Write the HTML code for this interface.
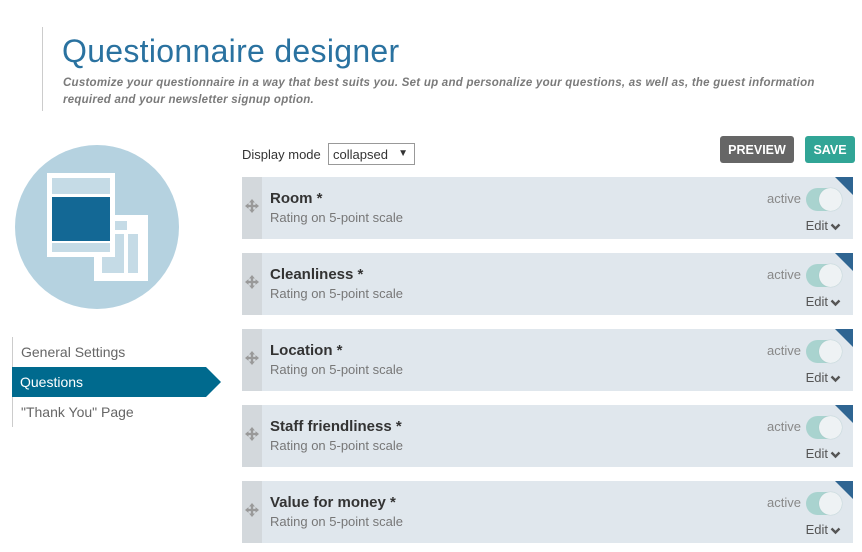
<!DOCTYPE html>
<html><head><meta charset="utf-8"><style>
*{margin:0;padding:0;box-sizing:border-box}
body{width:862px;height:552px;background:#fff;font-family:"Liberation Sans",sans-serif;position:relative;overflow:hidden}
.abs{position:absolute}
.vl{left:42px;top:27px;width:1px;height:84px;background:#ccc}
h1{position:absolute;left:62px;top:33px;font-size:32px;font-weight:normal;color:#2a72a0;letter-spacing:0.3px;white-space:nowrap}
.sub{position:absolute;left:63px;top:75px;width:780px;font-size:11.5px;font-weight:bold;font-style:italic;color:#7a7a7a;line-height:17px;letter-spacing:0.25px}
.nav{position:absolute;left:12px;top:337px;width:1px;height:90px;background:#ccc}
.ni{position:absolute;left:21px;font-size:14px;color:#666}
.q{position:absolute;left:12px;top:367px;width:194px;height:30px;background:#006a8e}
.qa{position:absolute;left:206px;top:367px;width:0;height:0;border-top:15px solid transparent;border-bottom:15px solid transparent;border-left:15px solid #006a8e}
.dm{position:absolute;left:242px;top:147px;font-size:13px;color:#333}
.sel{position:absolute;left:328px;top:143px;width:87px;height:22px;border:1px solid #999;font-size:13px;color:#333;padding:3px 4px}
.btn{position:absolute;top:136px;height:27px;color:#fff;font-weight:bold;font-size:12.5px;border-radius:3px;text-align:center;line-height:29px}
.card{position:absolute;left:242px;width:611px;height:62px;background:#e0e7ed;overflow:hidden}
.h{position:absolute;left:0;top:0;width:20px;height:62px;background:#d3d8dc}
.t{position:absolute;left:28px;top:13px;font-size:15px;font-weight:bold;color:#333}
.s{position:absolute;left:28px;top:33px;font-size:13px;color:#777}
.tri{position:absolute;right:0;top:0;width:0;height:0;border-top:18px solid #2f6592;border-left:18px solid transparent}
.act{position:absolute;right:52px;top:14px;font-size:13px;color:#888}
.tg{position:absolute;left:564px;top:11px;width:36px;height:23px;border-radius:12px;background:#a9d3cf}
.kn{position:absolute;right:0;top:0;width:23px;height:23px;border-radius:50%;background:#eef2f4;box-shadow:0 0 1px #9bb}
.ed{position:absolute;right:12px;top:41px;font-size:13px;color:#555}
.ed svg{vertical-align:middle;margin-left:2px}
</style></head><body>
<div class="abs vl"></div>
<h1>Questionnaire designer</h1>
<div class="sub">Customize your questionnaire in a way that best suits you. Set up and personalize your questions, as well as, the guest information required and your newsletter signup option.</div>
<svg class="abs" style="left:0;top:130px" width="200" height="190" viewBox="0 130 200 190">
<circle cx="97" cy="227" r="82" fill="#b5d2e0"/>
<rect x="94" y="215" width="54" height="66" fill="#fff"/>
<rect x="115" y="221" width="12" height="9" fill="#c5dbe6"/>
<rect x="102" y="234" width="22" height="39" fill="#c5dbe6"/>
<rect x="128" y="234" width="10" height="39" fill="#c5dbe6"/>
<rect x="47" y="173" width="68" height="84" fill="#fff"/>
<rect x="52" y="178" width="58" height="16" fill="#c5dbe6"/>
<rect x="52" y="197" width="58" height="44" fill="#136895"/>
<rect x="52" y="243" width="58" height="9" fill="#c5dbe6"/>
</svg>
<div class="nav"></div>
<div class="ni" style="top:344px">General Settings</div>
<div class="q"></div><div class="qa"></div>
<div class="ni" style="top:374px;left:20px;color:#fff">Questions</div>
<div class="ni" style="top:404px">"Thank You" Page</div>
<div class="dm">Display mode</div>
<div class="sel">collapsed<span style="position:absolute;right:6px;top:4px;font-size:10px">▼</span></div>
<div class="btn" style="left:720px;width:74px;background:#666">PREVIEW</div>
<div class="btn" style="left:805px;width:50px;background:#31a596">SAVE</div>

<div class="card" style="top:177px"><div class="h"></div><svg class="abs" style="left:3px;top:22px" width="14" height="14" viewBox="0 0 12 12" fill="#999"><path d="M6 0L8.5 3H7V5H9V3.5L12 6L9 8.5V7H7V9H8.5L6 12L3.5 9H5V7H3V8.5L0 6L3 3.5V5H5V3H3.5Z"/></svg><div class="t">Room *</div><div class="s">Rating on 5-point scale</div><div class="tri"></div><div class="act">active</div><div class="tg"><div class="kn"></div></div><div class="ed">Edit<svg width="11" height="8" viewBox="0 0 11 8"><path d="M1.5 1.5L5.5 5.5L9.5 1.5" stroke="#555" stroke-width="2.4" fill="none"/></svg></div></div>
<div class="card" style="top:253px"><div class="h"></div><svg class="abs" style="left:3px;top:22px" width="14" height="14" viewBox="0 0 12 12" fill="#999"><path d="M6 0L8.5 3H7V5H9V3.5L12 6L9 8.5V7H7V9H8.5L6 12L3.5 9H5V7H3V8.5L0 6L3 3.5V5H5V3H3.5Z"/></svg><div class="t">Cleanliness *</div><div class="s">Rating on 5-point scale</div><div class="tri"></div><div class="act">active</div><div class="tg"><div class="kn"></div></div><div class="ed">Edit<svg width="11" height="8" viewBox="0 0 11 8"><path d="M1.5 1.5L5.5 5.5L9.5 1.5" stroke="#555" stroke-width="2.4" fill="none"/></svg></div></div>
<div class="card" style="top:329px"><div class="h"></div><svg class="abs" style="left:3px;top:22px" width="14" height="14" viewBox="0 0 12 12" fill="#999"><path d="M6 0L8.5 3H7V5H9V3.5L12 6L9 8.5V7H7V9H8.5L6 12L3.5 9H5V7H3V8.5L0 6L3 3.5V5H5V3H3.5Z"/></svg><div class="t">Location *</div><div class="s">Rating on 5-point scale</div><div class="tri"></div><div class="act">active</div><div class="tg"><div class="kn"></div></div><div class="ed">Edit<svg width="11" height="8" viewBox="0 0 11 8"><path d="M1.5 1.5L5.5 5.5L9.5 1.5" stroke="#555" stroke-width="2.4" fill="none"/></svg></div></div>
<div class="card" style="top:405px"><div class="h"></div><svg class="abs" style="left:3px;top:22px" width="14" height="14" viewBox="0 0 12 12" fill="#999"><path d="M6 0L8.5 3H7V5H9V3.5L12 6L9 8.5V7H7V9H8.5L6 12L3.5 9H5V7H3V8.5L0 6L3 3.5V5H5V3H3.5Z"/></svg><div class="t">Staff friendliness *</div><div class="s">Rating on 5-point scale</div><div class="tri"></div><div class="act">active</div><div class="tg"><div class="kn"></div></div><div class="ed">Edit<svg width="11" height="8" viewBox="0 0 11 8"><path d="M1.5 1.5L5.5 5.5L9.5 1.5" stroke="#555" stroke-width="2.4" fill="none"/></svg></div></div>
<div class="card" style="top:481px"><div class="h"></div><svg class="abs" style="left:3px;top:22px" width="14" height="14" viewBox="0 0 12 12" fill="#999"><path d="M6 0L8.5 3H7V5H9V3.5L12 6L9 8.5V7H7V9H8.5L6 12L3.5 9H5V7H3V8.5L0 6L3 3.5V5H5V3H3.5Z"/></svg><div class="t">Value for money *</div><div class="s">Rating on 5-point scale</div><div class="tri"></div><div class="act">active</div><div class="tg"><div class="kn"></div></div><div class="ed">Edit<svg width="11" height="8" viewBox="0 0 11 8"><path d="M1.5 1.5L5.5 5.5L9.5 1.5" stroke="#555" stroke-width="2.4" fill="none"/></svg></div></div>
</body></html>
